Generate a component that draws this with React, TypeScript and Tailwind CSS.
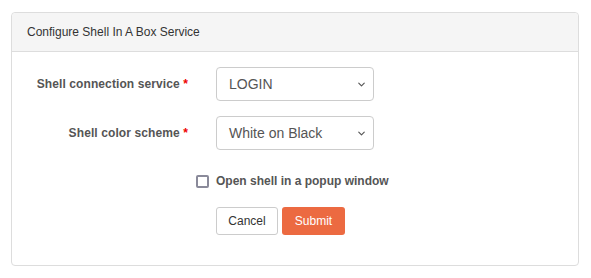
import { ChevronDown } from 'lucide-react';

function Field({ label, value }: { label: string; value: string }) {
    return (
        <div className="flex items-center">
            <label className="w-[176px] text-right text-[12px] font-bold tracking-[0.1px] text-[#555]">
                {label} <span className="text-[#e00]">*</span>
            </label>
            <div className="ml-[28px] flex h-[34px] w-[158px] items-center justify-between rounded-[4px] border border-[#ccc] bg-white pl-[12px] pr-[6px] text-[14px] text-[#555]">
                <span>{value}</span>
                <ChevronDown size={11} strokeWidth={2.5} className="text-[#555]" />
            </div>
        </div>
    );
}

export default function App() {
    return (
        <div className="min-h-screen bg-white pl-[11px] pr-[12px] pt-[12px] font-['Liberation_Sans',Arial,sans-serif]">
            <div className="w-[568px] rounded-[4px] border border-[#ddd] bg-white">
                <div className="flex h-[39px] items-center rounded-t-[4px] border-b border-[#ddd] bg-[#f5f5f5] px-[15px] text-[12px] text-[#333]">
                    Configure Shell In A Box Service
                </div>
                <div className="flex flex-col pb-[30px] pt-[15px]">
                    <div className="flex flex-col gap-[15px]">
                        <Field label="Shell connection service" value="LOGIN" />
                        <Field label="Shell color scheme" value="White on Black" />
                    </div>
                    <div className="mt-[22px] flex items-center pl-[184px]">
                        <span className="h-[13px] w-[13px] rounded-[2px] border-2 border-[#8a8a9a] bg-white" />
                        <span className="ml-[7px] text-[12px] font-bold text-[#555]">Open shell in a popup window</span>
                    </div>
                    <div className="mt-[17px] flex gap-[4px] pl-[204px]">
                        <button className="h-[28px] w-[62px] rounded-[3px] border border-[#ccc] bg-white text-[12px] text-[#333]">
                            Cancel
                        </button>
                        <button className="h-[28px] w-[63px] rounded-[3px] bg-[#ec6a41] text-[12px] text-white">
                            Submit
                        </button>
                    </div>
                </div>
            </div>
        </div>
    );
}
